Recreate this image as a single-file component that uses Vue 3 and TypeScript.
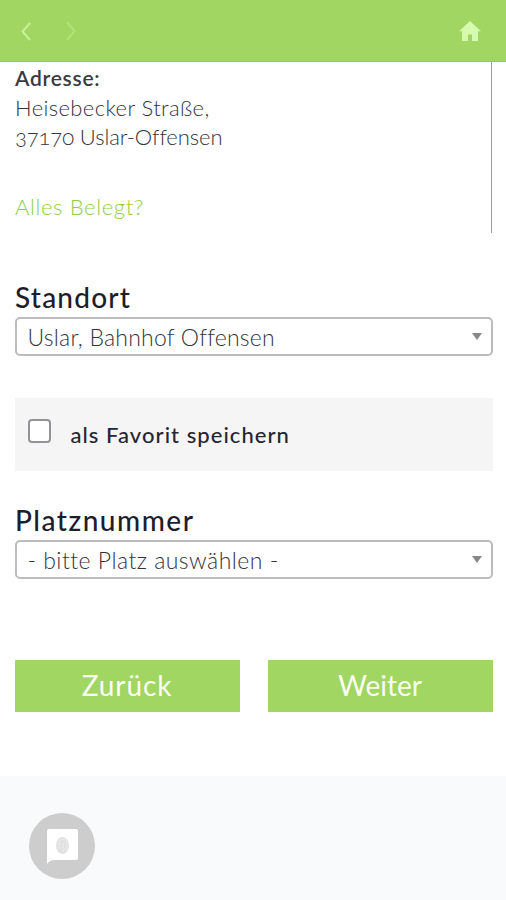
<script setup lang="ts">
import { ref } from 'vue'

const favorite = ref(false)
const fields = {
  location: 'Uslar, Bahnhof Offensen',
  place: '- bitte Platz auswählen -',
}
</script>

<template>
  <div class="screen">
    <header class="topbar">
      <nav class="history">
        <svg class="chevron" viewBox="0 0 12 22"><path d="M10 3 2.500 11.500 10 20" /></svg>
        <svg class="chevron next" viewBox="0 0 12 22"><path d="M2 2 9.500 11 2 20" /></svg>
      </nav>
      <svg class="home" viewBox="0 0 22 20"><path d="M11 0 0 10.300h3V20h6v-6.500h4V20h6v-9.700h3z" /></svg>
    </header>

    <main class="content">
      <section class="address">
        <strong class="address-title">Adresse:</strong>
        <span class="street">Heisebecker Straße,</span>
        <span class="city">37170 Uslar-Offensen</span>
        <a class="link">Alles Belegt?</a>
      </section>

      <h2 class="heading location">Standort</h2>
      <div class="select">
        <span class="location-value">{{ fields.location }}</span>
        <i class="caret"></i>
      </div>

      <label class="favorite">
        <input v-model="favorite" class="check" type="checkbox" />
        <span class="favorite-text">als Favorit speichern</span>
      </label>

      <h2 class="heading place">Platznummer</h2>
      <div class="select">
        <span class="place-value">{{ fields.place }}</span>
        <i class="caret"></i>
      </div>

      <div class="actions">
        <button class="button back">Zurück</button>
        <button class="button forward">Weiter</button>
      </div>
    </main>

    <footer class="footer">
      <div class="badge">
        <svg viewBox="0 0 66 66">
          <path class="bubble" d="M20 16h27q2 0 2 2v27q0 2-2 2H25q-4 0-7 4V18q0-2 2-2z" />
          <ellipse class="print" cx="33.500" cy="32.500" rx="6.500" ry="8.500" />
          <path class="ridges" d="M30 37v-7q0-4 4-4t4 4v6M34 39v-9" />
        </svg>
      </div>
    </footer>
  </div>
</template>

<style>
body {
  margin: 0;
  background: #fff;
}
</style>

<style scoped>
.screen {
  display: flex;
  flex-direction: column;
  height: 900px;
  overflow: hidden;
  font-family: Lato, 'Open Sans', sans-serif;
  color: #22222c;
}
.topbar {
  display: flex;
  flex: none;
  align-items: center;
  justify-content: space-between;
  box-sizing: border-box;
  height: 62px;
  padding: 0 25px 0 20px;
  background: #a0d661;
  border-bottom: 1px solid #94cd50;
}
.history {
  display: flex;
  gap: 33px;
}
.chevron {
  width: 12px;
  height: 22px;
  fill: none;
  stroke: #c6f398;
  stroke-width: 2;
}
.next {
  stroke: #b0e378;
}
.home {
  width: 22px;
  height: 20px;
  fill: #d5fab0;
}
.content {
  flex: none;
  box-sizing: border-box;
  height: 714px;
  padding: 0 14px 0 15px;
}
.address {
  display: flex;
  flex-direction: column;
  box-sizing: border-box;
  height: 171px;
  padding-top: 1px;
  border-right: 1px solid #9c9ca0;
  font-size: 22px;
  font-weight: 300;
  line-height: 29.700px;
  color: #34343c;
  white-space: nowrap;
}
.address-title {
  font-size: 21px;
  font-weight: 600;
  letter-spacing: 0.750px;
  color: #3a3a42;
}
.street {
  letter-spacing: 0.380px;
}
.city {
  font-variant-numeric: oldstyle-nums;
  letter-spacing: -0.090px;
}
.link {
  margin-top: 40px;
  color: #8fce48;
  letter-spacing: 0.640px;
}
.heading {
  margin: 0;
  font-size: 28px;
  font-weight: 500;
  line-height: 32px;
  color: #1d1d2b;
}
.location {
  padding-top: 48px;
  letter-spacing: 1.200px;
}
.place {
  padding-top: 33px;
  letter-spacing: 1.500px;
}
.select {
  display: flex;
  align-items: center;
  justify-content: space-between;
  box-sizing: border-box;
  width: 478px;
  height: 39px;
  margin: 4px 0 0 -0.500px;
  padding: 0 9px 0 11px;
  border: 2px solid #bcbcbf;
  border-radius: 5px;
  font-size: 23px;
  font-weight: 300;
  line-height: 34px;
  color: #34343c;
  white-space: nowrap;
}
.location-value {
  letter-spacing: 0.200px;
}
.place-value {
  letter-spacing: 0.470px;
}
.caret {
  border: 5.500px solid transparent;
  border-top: 7px solid #88888b;
  border-bottom: 0;
}
.favorite {
  display: flex;
  box-sizing: border-box;
  width: 478px;
  height: 73px;
  margin: 42px 0 0 -0.500px;
  padding: 21px 14px 21px 13px;
  background: #f5f5f5;
}
.check {
  flex: none;
  appearance: none;
  box-sizing: border-box;
  width: 23px;
  height: 24px;
  margin: 0 20px 0 0;
  border: 2px solid #929298;
  border-radius: 4px;
  background: #fff;
}
.favorite-text {
  font-size: 22px;
  font-weight: 500;
  line-height: 31px;
  letter-spacing: 1.050px;
  color: #262632;
  white-space: nowrap;
}
.actions {
  display: grid;
  grid-template-columns: 225px 225px;
  gap: 28px;
  margin: 80.500px 0 0 -0.500px;
}
.button {
  height: 52px;
  padding: 0 0 2px;
  border: 0;
  background: #a0d661;
  color: #fafff5;
  font-family: inherit;
  font-size: 28px;
}
.back {
  letter-spacing: 0.900px;
}
.footer {
  flex: 1;
  padding: 37px 29px;
  background: #f8fafc;
}
.badge {
  width: 66px;
  height: 66px;
  border-radius: 50%;
  background: #cdcdcd;
}
.bubble {
  fill: #fff;
}
.print {
  fill: #e2e2e2;
}
.ridges {
  fill: none;
  stroke: #ebebeb;
}
</style>
